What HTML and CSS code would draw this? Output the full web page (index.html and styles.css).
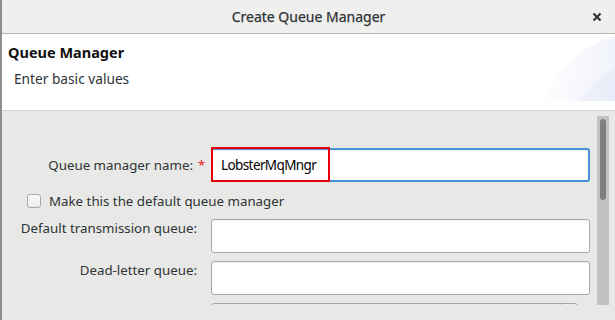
FILE: index.html
```html
<!DOCTYPE html>
<html lang="en">
<head>
  <meta charset="UTF-8" />
  <title>Create Queue Manager</title>
  <link rel="stylesheet" href="styles.css">
</head>
<body>
<div class="window">
  <div class="titlebar">
    <span class="title">Create Queue Manager</span>
    <span class="close">
      <svg width="10" height="10" viewBox="0 0 10 10"><path d="M1.5 1.5 L8.5 8.5 M8.5 1.5 L1.5 8.5" stroke="#2e3436" stroke-width="2.2" fill="none"/></svg>
    </span>
  </div>

  <div class="banner">
    <div class="banner-art"></div>
    <div class="banner-title">Queue Manager</div>
    <div class="banner-desc">Enter basic values</div>
  </div>

  <div class="content">
    <div class="scroll">
      <div class="form">
        <label class="field-label required">Queue manager name:<span class="req">*</span></label>
        <div class="name-wrap">
          <input class="text-input focused" type="text" value="LobsterMqMngr" />
          <div class="highlight"></div>
        </div>

        <label class="check-row">
          <span class="checkbox"></span>
          Make this the default queue manager
        </label>

        <label class="field-label">Default transmission queue:</label>
        <input class="text-input" type="text" />

        <label class="field-label">Dead-letter queue:</label>
        <input class="text-input" type="text" />

        <div class="field-label"></div>
        <div class="combo"><span class="combo-btn"></span></div>
      </div>
      <div class="scrollbar"><div class="thumb"></div></div>
    </div>
  </div>
</div>
</body>
</html>
```

FILE: styles.css
```css
body {
  margin: 0;
  font-family: "Noto Sans", sans-serif;
  font-size: 13.3px;
  color: #2e3436;
  background: #e8e8e7;
  overflow: hidden;
}
.window {
  height: 320px;
  border-left: 2px solid #8e8e8e;
  display: flex;
  flex-direction: column;
}
.titlebar {
  height: 33px;
  border-bottom: 1px solid #b4b4b1;
  background: #efefee;
  display: flex;
  align-items: center;
  justify-content: center;
  position: relative;
}
.title {
  font-size: 14px;
  color: #2e3436;
  -webkit-text-stroke: 0.25px #2e3436;
}
.close {
  position: absolute;
  right: 13px;
  top: 12px;
  display: flex;
}
.banner {
  height: 76px;
  background: #fff;
  border-bottom: 1px solid #d4d4d1;
  position: relative;
  overflow: hidden;
}
.banner-art {
  position: absolute;
  right: 0;
  top: 0;
  width: 80px;
  height: 67px;
  overflow: hidden;
}
.banner-art::before,
.banner-art::after {
  content: "";
  position: absolute;
  border-radius: 50%;
}
.banner-art::before {
  left: 6px;
  top: 0;
  width: 192px;
  height: 192px;
  background: linear-gradient(100deg, #ffffff 0%, #f1f3fb 35%, #eaeef9 100%);
}
.banner-art::after {
  left: 28px;
  top: 22px;
  width: 200px;
  height: 200px;
  background: linear-gradient(100deg, #f3f5fc 0%, #e2e7f7 45%);
}
.banner-title {
  font-weight: bold;
  font-size: 14.5px;
  color: #111;
  padding: 8px 0 0 6px;
  line-height: 20px;
  position: relative;
}
.banner-desc {
  padding: 8px 0 0 12px;
  line-height: 18px;
  font-size: 13.7px;
  position: relative;
}
.content {
  flex: 1;
}
.scroll {
  height: 194px;
  overflow: hidden;
  display: flex;
}
.form {
  flex: 1;
  padding-top: 37px;
  display: grid;
  grid-template-columns: 202px 379px;
  column-gap: 7px;
  row-gap: 8px;
  align-content: start;
}
.field-label {
  text-align: right;
  padding-right: 7px;
  line-height: 18px;
}
.field-label.required {
  padding-right: 0;
  align-self: center;
  display: flex;
  justify-content: flex-end;
  align-items: center;
  gap: 5px;
}
.req {
  color: #e01b24;
  font-size: 13px;
  width: 6px;
}
.text-input {
  box-sizing: border-box;
  height: 34px;
  width: 379px;
  margin: 0;
  border: 1px solid #a8a8a5;
  border-radius: 3px;
  background: #fff;
  box-shadow: inset 0 1px 1px rgba(0,0,0,0.06);
  font-family: "Noto Sans", sans-serif;
  font-size: 13.5px;
  letter-spacing: -0.6px;
  color: #000;
  padding: 0 8px;
  outline: none;
}
.text-input.focused {
  border: 2px solid #4a90d9;
}
.name-wrap {
  position: relative;
  height: 34px;
}
.highlight {
  position: absolute;
  left: 0;
  top: -1px;
  width: 115px;
  height: 31px;
  border: 2px solid #e8000a;
}
.check-row {
  grid-column: 1 / 3;
  height: 21px;
  display: flex;
  align-items: center;
  gap: 8px;
  padding-left: 25px;
}
.checkbox {
  box-sizing: border-box;
  width: 14px;
  height: 14px;
  border: 1px solid #a8a8a5;
  border-radius: 3px;
  background: linear-gradient(#fbfbfb, #ebebea);
}
.combo {
  box-sizing: border-box;
  width: 367px;
  height: 34px;
  border: 1px solid #a8a8a5;
  border-radius: 3px;
  background: linear-gradient(#ededec, #e1e1e0);
  display: flex;
  justify-content: flex-end;
}
.combo-btn {
  width: 15px;
  border-left: 1px solid #c4c4c2;
}
.scrollbar {
  width: 12px;
  margin: 5px 6px 0 0;
  background: #c2c2c0;
  display: flex;
  justify-content: center;
}
.thumb {
  width: 6px;
  height: 81px;
  margin-top: 3px;
  border-radius: 3px;
  background: #7f7f7e;
}
```
